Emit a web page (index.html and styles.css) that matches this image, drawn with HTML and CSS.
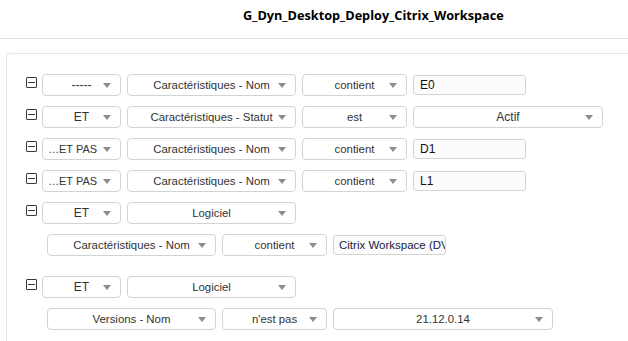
FILE: index.html
```html
<!DOCTYPE html>
<html lang="fr">
<head>
    <meta charset="UTF-8">
    <title>G_Dyn_Desktop_Deploy_Citrix_Workspace</title>
    <link rel="stylesheet" href="styles.css">
</head>
<body>
    <!-- Header -->
    <header class="header">
        <h1 class="title">G_Dyn_Desktop_Deploy_Citrix_Workspace</h1>
    </header>

    <!-- Criteria panel -->
    <main class="panel">
        <div class="crit-row">
            <span class="toggle"></span>
            <div class="sel sel-op"><span>-----</span><i class="caret"></i></div>
            <div class="sel sel-field"><span>Caractéristiques - Nom</span><i class="caret"></i></div>
            <div class="sel sel-cmp"><span>contient</span><i class="caret"></i></div>
            <div class="field">E0</div>
        </div>

        <div class="crit-row">
            <span class="toggle"></span>
            <div class="sel sel-op"><span>ET</span><i class="caret"></i></div>
            <div class="sel sel-field"><span>Caractéristiques - Statut</span><i class="caret"></i></div>
            <div class="sel sel-cmp"><span>est</span><i class="caret"></i></div>
            <div class="sel sel-value"><span>Actif</span><i class="caret"></i></div>
        </div>

        <div class="crit-row">
            <span class="toggle"></span>
            <div class="sel sel-op clipped"><span>…ET PAS</span><i class="caret"></i></div>
            <div class="sel sel-field"><span>Caractéristiques - Nom</span><i class="caret"></i></div>
            <div class="sel sel-cmp"><span>contient</span><i class="caret"></i></div>
            <div class="field">D1</div>
        </div>

        <div class="crit-row">
            <span class="toggle"></span>
            <div class="sel sel-op clipped"><span>…ET PAS</span><i class="caret"></i></div>
            <div class="sel sel-field"><span>Caractéristiques - Nom</span><i class="caret"></i></div>
            <div class="sel sel-cmp"><span>contient</span><i class="caret"></i></div>
            <div class="field">L1</div>
        </div>

        <div class="crit-group">
            <div class="crit-row">
                <span class="toggle"></span>
                <div class="sel sel-op"><span>ET</span><i class="caret"></i></div>
                <div class="sel sel-field"><span>Logiciel</span><i class="caret"></i></div>
            </div>
            <div class="sub-row">
                <div class="sel sel-field"><span>Caractéristiques - Nom</span><i class="caret"></i></div>
                <div class="sel sel-cmp"><span>contient</span><i class="caret"></i></div>
                <div class="field dark">Citrix Workspace (DV</div>
            </div>
        </div>

        <div class="crit-group">
            <div class="crit-row">
                <span class="toggle"></span>
                <div class="sel sel-op"><span>ET</span><i class="caret"></i></div>
                <div class="sel sel-field"><span>Logiciel</span><i class="caret"></i></div>
            </div>
            <div class="sub-row">
                <div class="sel sel-field"><span>Versions - Nom</span><i class="caret"></i></div>
                <div class="sel sel-cmp"><span>n'est pas</span><i class="caret"></i></div>
                <div class="sel sel-wide"><span>21.12.0.14</span><i class="caret"></i></div>
            </div>
        </div>
    </main>
</body>
</html>
```

FILE: styles.css
```css
/* Global Styles */
* {
    margin: 0;
    padding: 0;
    box-sizing: border-box;
}

body {
    background: #ffffff;
    color: #333333;
    font-family: 'Liberation Sans', Arial, sans-serif;
    font-size: 11px;
    overflow: hidden;
}

/* Header */
.header {
    height: 39px;
    border-bottom: 1px solid #e3e3e3;
    padding-left: 243px;
    display: flex;
    align-items: center;
}

.title {
    font-family: 'Open Sans', sans-serif;
    font-size: 12.7px;
    font-weight: 700;
    color: #000000;
    padding-bottom: 9px;
}

/* Panel */
.panel {
    margin: 14px 0 0 6px;
    border: 1px solid #e6e6e6;
    border-right: none;
    border-bottom: none;
    border-radius: 5px 0 0 0;
    padding: 20px 0 0 19px;
    height: 288px;
    overflow: hidden;
}

.crit-group + .crit-group {
    margin-top: 20px;
}

.crit-row,
.sub-row {
    display: flex;
    align-items: center;
    height: 22px;
    margin-bottom: 10px;
}

.sub-row {
    padding-left: 21px;
}

/* Minus toggle */
.toggle {
    position: relative;
    width: 11px;
    height: 11px;
    border: 1px solid #3a3a3a;
    border-radius: 1px;
    margin: 0 5px 5px 0;
    flex: none;
}

.toggle::after {
    content: "";
    position: absolute;
    left: 1px;
    right: 1px;
    top: 4px;
    height: 1px;
    background: #3a3a3a;
}

/* Select boxes */
.sel {
    position: relative;
    height: 22px;
    border: 1px solid #d3d3d3;
    border-radius: 4px;
    display: flex;
    align-items: center;
    justify-content: center;
    margin-right: 6px;
    flex: none;
    white-space: nowrap;
    overflow: hidden;
    font-size: 12px;
}

.caret {
    position: absolute;
    right: 9px;
    top: 8px;
    width: 0;
    height: 0;
    border-left: 4px solid transparent;
    border-right: 4px solid transparent;
    border-top: 5px solid #8c8c8c;
}

.sel-op { width: 79px; }
.sel-field { width: 169px; }
.sel-cmp { width: 105px; }
.sel-value { width: 190px; }
.sel-wide { width: 220px; }

.sel-field span,
.sel-cmp span,
.sel-wide span {
    font-size: 11.4px;
}

.sel-op.clipped {
    justify-content: flex-start;
    padding-left: 5px;
    font-size: 11px;
}

/* Text inputs */
.field {
    width: 113px;
    height: 20px;
    border: 1px solid #d3d3d3;
    border-radius: 3px;
    background: #fcfcfc;
    padding-left: 6px;
    display: flex;
    align-items: center;
    color: #111111;
    white-space: nowrap;
    overflow: hidden;
    flex: none;
    font-size: 12px;
}

.field.dark {
    color: #1a1a3a;
    padding-left: 5px;
    font-size: 11.5px;
}
```
